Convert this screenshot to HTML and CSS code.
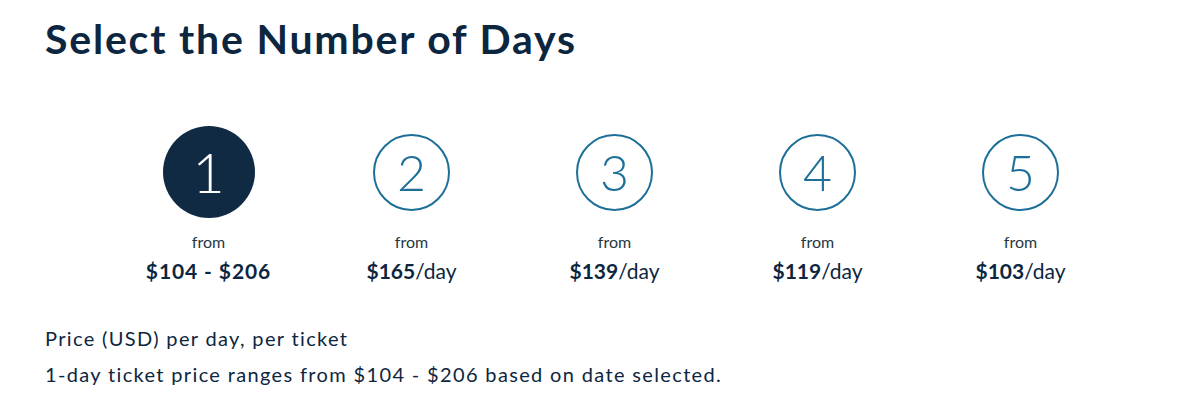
FILE: index.html
```html
<!DOCTYPE html>
<html lang="en">
<head>
<meta charset="utf-8">
<title>Select the Number of Days</title>
<link rel="stylesheet" href="styles.css">
</head>
<body>
<main class="page">
  <h1 class="title">Select the Number of Days</h1>
  <div class="days">
    <div class="day">
      <div class="circle-slot"><span class="circle selected">1</span></div>
      <div class="from">from</div>
      <div class="price range"><b>$104 - $206</b></div>
    </div>
    <div class="day">
      <div class="circle-slot"><span class="circle">2</span></div>
      <div class="from">from</div>
      <div class="price"><b>$165</b>/day</div>
    </div>
    <div class="day">
      <div class="circle-slot"><span class="circle">3</span></div>
      <div class="from">from</div>
      <div class="price"><b>$139</b>/day</div>
    </div>
    <div class="day">
      <div class="circle-slot"><span class="circle">4</span></div>
      <div class="from">from</div>
      <div class="price"><b>$119</b>/day</div>
    </div>
    <div class="day">
      <div class="circle-slot"><span class="circle">5</span></div>
      <div class="from">from</div>
      <div class="price"><b>$103</b>/day</div>
    </div>
  </div>
  <div class="notes">
    <p>Price (USD) per day, per ticket</p>
    <p>1-day ticket price ranges from $104 - $206 based on date selected.</p>
  </div>
</main>
</body>
</html>
```

FILE: styles.css
```css
html, body {
  margin: 0;
  padding: 0;
  background: #ffffff;
}
body {
  font-family: Lato, "Noto Sans", "Liberation Sans", sans-serif;
  color: #253746;
}
.page {
  padding: 14px 0 0 45px;
}
.title {
  margin: 0;
  font-size: 41px;
  line-height: 50px;
  font-weight: 700;
  color: #0d2640;
  letter-spacing: 1.8px;
}
.days {
  display: grid;
  grid-template-columns: repeat(5, 203px);
  margin: 62px 0 0 62px;
}
.day {
  display: flex;
  flex-direction: column;
  align-items: center;
}
.circle-slot {
  height: 92px;
  display: flex;
  align-items: center;
  justify-content: center;
}
.circle {
  width: 73px;
  height: 73px;
  border: 2px solid #1d6f98;
  border-radius: 50%;
  display: flex;
  align-items: center;
  justify-content: center;
  font-size: 50px;
  font-weight: 300;
  color: #1d6f98;
  line-height: 1;
}
.circle.selected {
  width: 92px;
  height: 92px;
  border: none;
  background: #0f2a42;
  color: #ffffff;
  font-size: 56px;
}
.from {
  margin-top: 14px;
  font-size: 16px;
  line-height: 20px;
  color: #253746;
}
.price {
  margin-top: 6px;
  font-size: 21px;
  line-height: 26px;
  color: #0d2640;
}
.price.range {
  letter-spacing: 0.9px;
}
.price b {
  font-weight: 700;
}
.notes {
  margin-top: 36px;
}
.notes p {
  margin: 0;
  font-size: 20px;
  line-height: 36px;
  color: #0d2640;
  letter-spacing: 1.35px;
}
```
